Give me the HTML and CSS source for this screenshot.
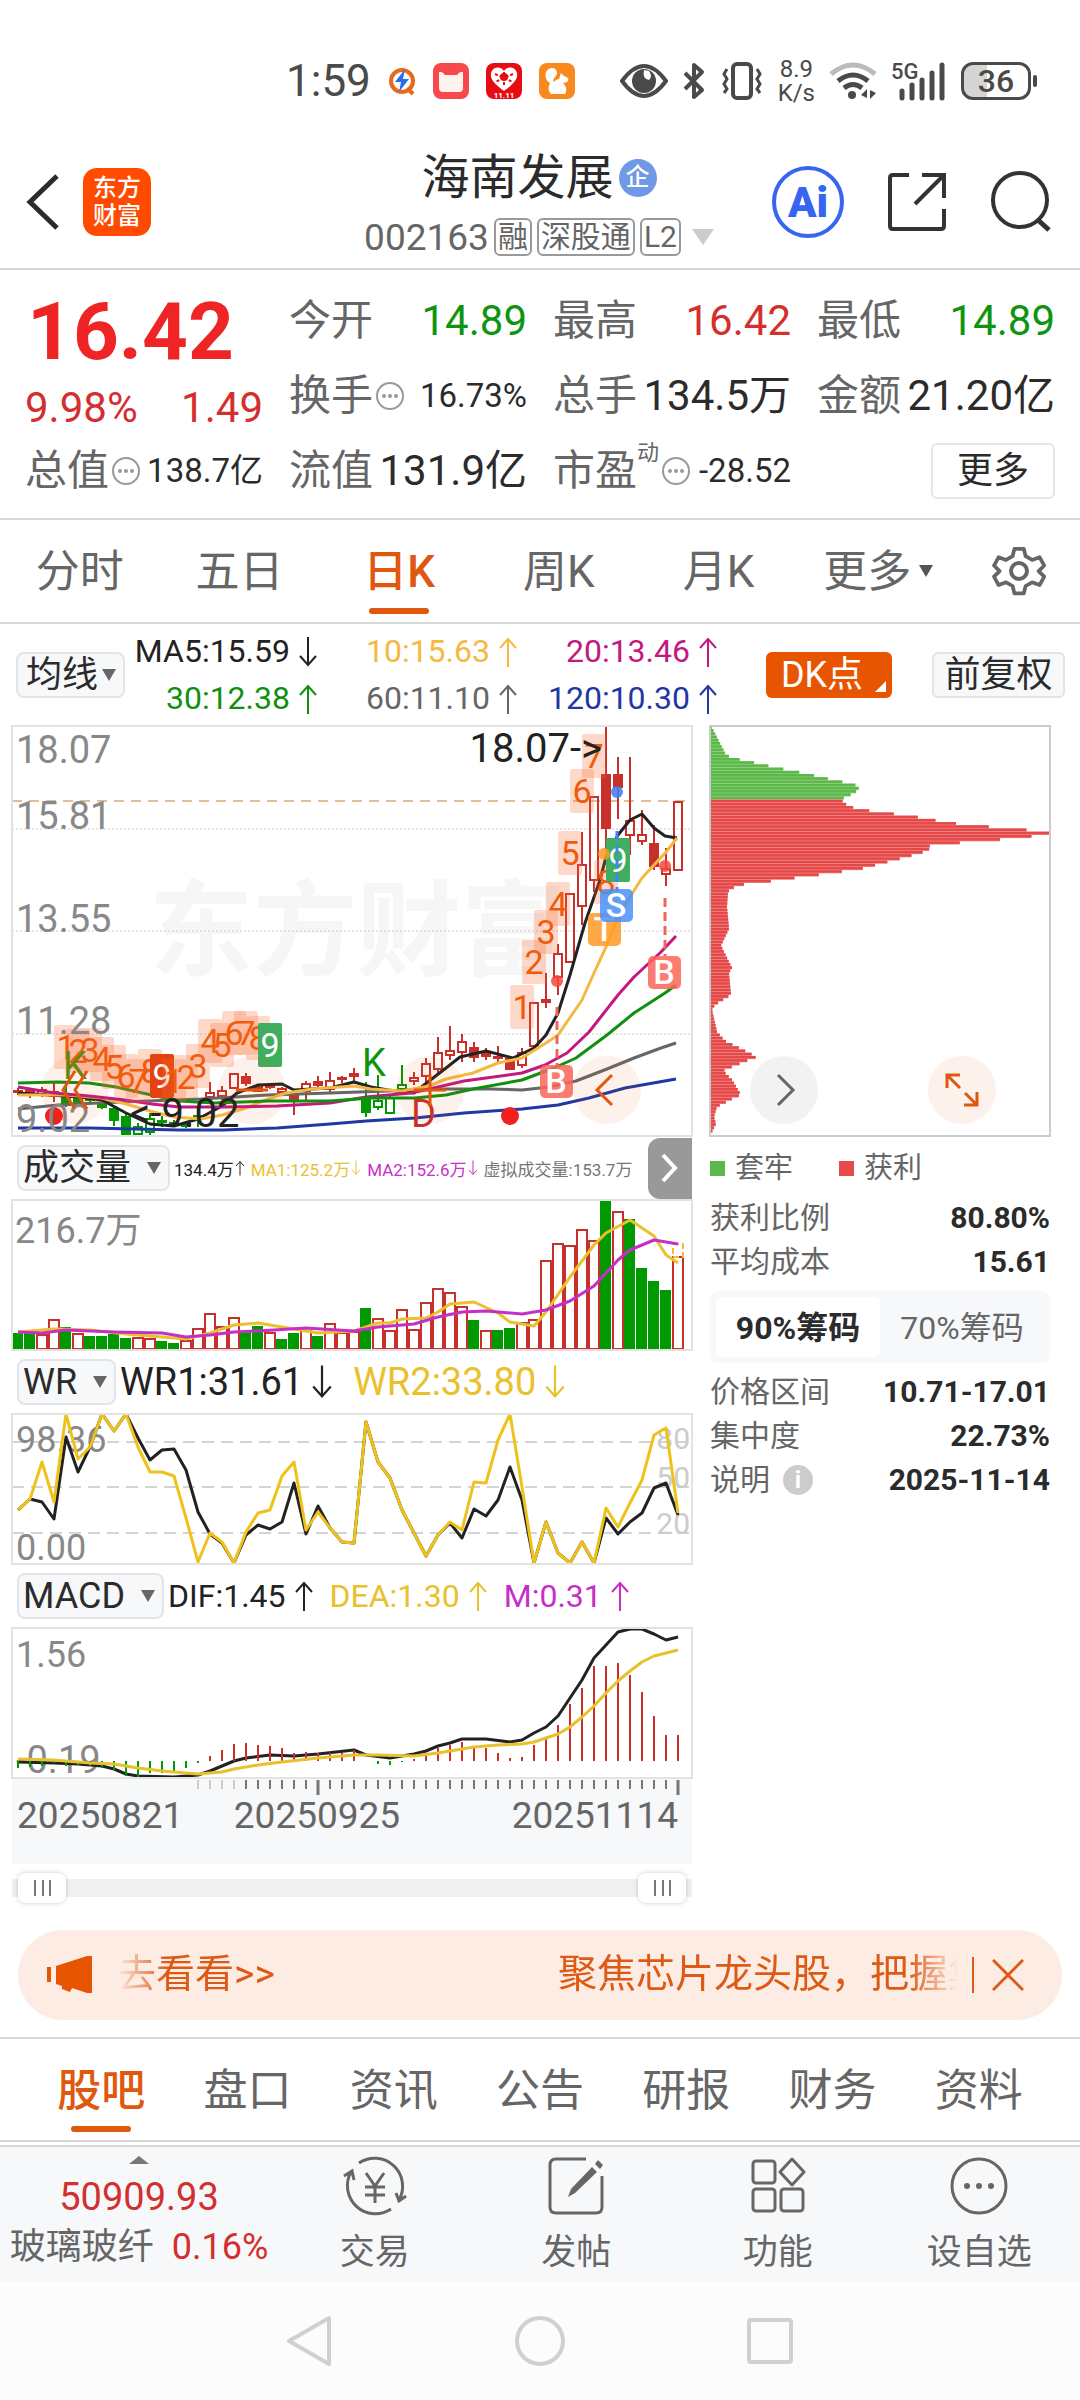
FILE: index.html
```html
<!DOCTYPE html>
<html lang="zh-CN">
<head>
    <meta charset="UTF-8">
    <meta name="viewport" content="width=device-width, initial-scale=1.0">
    <title>海南发展 002163</title>
    <link rel="stylesheet" href="styles.css">
</head>
<body>
    <svg class="defs" aria-hidden="true">
        <symbol id="up" viewBox="0 0 20 30"><path d="M10 30V2M2 11l8-9 8 9" fill="none" stroke="currentColor" stroke-width="2"/></symbol>
        <symbol id="down" viewBox="0 0 20 30"><path d="M10 0v28M2 19l8 9 8-9" fill="none" stroke="currentColor" stroke-width="2"/></symbol>
        <symbol id="dots" viewBox="0 0 30 30"><circle cx="15" cy="15" r="13" fill="none" stroke="#999" stroke-width="2"/><g fill="#999"><circle cx="9" cy="15" r="2"/><circle cx="15" cy="15" r="2"/><circle cx="21" cy="15" r="2"/></g></symbol>
    </svg>

    <div class="status-bar">
        <span class="clock">1:59</span>
        <svg width="28" height="30" viewBox="0 0 28 30"><circle cx="14" cy="15" r="11" fill="#fff" stroke="#e8691b" stroke-width="4"/><path d="M19 22l6 6" stroke="#e8691b" stroke-width="4"/><path d="M17 3L7 16h6l-2 10 10-13h-6z" fill="#2c6cf0"/></svg>
        <svg width="36" height="36" viewBox="0 0 36 36"><rect width="36" height="36" rx="8" fill="#f8484c"/><path d="M6 9q3-1 6 3h12q3-4 6-3v16q0 4-4 4H10q-4 0-4-4z" fill="#fff3ef"/></svg>
        <svg width="36" height="36" viewBox="0 0 36 36"><rect width="36" height="36" rx="8" fill="#e60c14"/><path d="M18 28C7 20 4 15 5 10c2-7 10-7 13-2 3-5 11-5 13 2 1 5-2 10-13 18z" fill="#fff"/><path d="M18 9v15M9 11l18 8M27 11L9 19" stroke="#e60c14" stroke-width="2" stroke-dasharray="3 2"/><circle cx="18" cy="14" r="4" fill="#e60c14"/><text x="18" y="35" text-anchor="middle" font-size="8" font-weight="700" fill="#fff">11.11</text></svg>
        <svg width="36" height="36" viewBox="0 0 36 36"><rect width="36" height="36" rx="8" fill="#f8891d"/><path d="M7 15C5 9 9 5 13 5c5 0 6 5 4 8-2 2-3 4-3 6 2-1 4-3 6-3l2-6 3 3c4 1 6 4 3 6l-4 1c4 4 4 8 2 11H12c-3-3-3-7-1-11-2-1-4-3-4-5z" fill="#fff"/></svg>
        <div class="status-right">
            <svg width="48" height="34" viewBox="0 0 48 34"><path d="M2 17Q24-13 46 17 24 47 2 17z" fill="none" stroke="#4a4a4a" stroke-width="4"/><circle cx="24" cy="17" r="12" fill="#4a4a4a"/><path d="M24 6q-2 9 5 10 4-4 0-9z" fill="#fff"/></svg>
            <svg width="24" height="38" viewBox="0 0 24 38"><path d="M3 11l17 17-8 7V3l8 7L3 27" fill="none" stroke="#4a4a4a" stroke-width="4" stroke-linejoin="round"/></svg>
            <svg width="44" height="38" viewBox="0 0 44 38"><rect x="13" y="2" width="18" height="34" rx="4" fill="none" stroke="#4a4a4a" stroke-width="4"/><path d="M7 7L4 12l3 5-3 5 3 5-3 4M37 7l3 5-3 5 3 5-3 5 3 4" fill="none" stroke="#4a4a4a" stroke-width="3"/></svg>
            <span class="speed">8.9<br>K/s</span>
            <svg width="48" height="38" viewBox="0 0 48 38"><g fill="none" stroke-width="5"><path d="M2 12Q24-6 46 12" stroke="#bbb"/><path d="M9 19q15-12 30 0M15 26q9-7 18 0" stroke="#4a4a4a"/></g><circle cx="23" cy="33" r="4" fill="#4a4a4a"/><path d="M32 33l6-6v9zM47 31l-6 6v-9z" fill="#4a4a4a"/></svg>
            <svg width="56" height="42" viewBox="0 0 56 42"><text x="0" y="19" font-size="22" font-weight="500" fill="#4a4a4a">5G</text><path d="M11 31v7M21 25v13M31 20v18M41 13v25M51 5v33" stroke="#4a4a4a" stroke-width="5" stroke-linecap="round"/></svg>
            <span class="battery">36</span>
        </div>
    </div>

    <header class="header">
        <div class="header-left">
            <button class="icon-btn" aria-label="返回"><svg width="34" height="58" viewBox="0 0 34 58"><path d="M31 3L4 29l27 26" fill="none" stroke="#2b2b2b" stroke-width="5"/></svg></button>
            <div class="logo">东方<br>财富</div>
        </div>
        <div class="title">
            <h1>海南发展<span class="ent">企</span></h1>
            <div class="code">002163<span class="tag">融</span><span class="tag">深股通</span><span class="tag">L2</span><svg width="22" height="16" viewBox="0 0 22 16"><path d="M0 0h22L11 16z" fill="#ccc"/></svg></div>
        </div>
        <div class="header-right">
            <button class="icon-btn ai" aria-label="AI 助手">Ai</button>
            <button class="icon-btn" aria-label="分享"><svg width="62" height="62" viewBox="0 0 62 62"><path d="M23 4H7q-3 0-3 3v48q0 3 3 3h48q3 0 3-3V38M36 4h22v23M57 5L29 33" fill="none" stroke="#333" stroke-width="4"/></svg></button>
            <button class="icon-btn" aria-label="搜索"><svg width="62" height="62" viewBox="0 0 62 62"><circle cx="30" cy="29" r="27" fill="none" stroke="#333" stroke-width="4"/><path d="M48 49l11 10" stroke="#333" stroke-width="5"/></svg></button>
        </div>
    </header>

    <section class="quote">
        <div class="price">
            <strong>16.42</strong>
            <div class="change"><span>9.98%</span><span>1.49</span></div>
        </div>
        <div class="stat"><span>今开</span><b class="green">14.89</b></div>
        <div class="stat"><span>最高</span><b class="red">16.42</b></div>
        <div class="stat"><span>最低</span><b class="green">14.89</b></div>
        <div class="stat"><span>换手<svg class="dots"><use href="#dots"/></svg></span><b class="small">16.73%</b></div>
        <div class="stat"><span>总手</span><b>134.5万</b></div>
        <div class="stat"><span>金额</span><b>21.20亿</b></div>
        <div class="stat"><span>总值<svg class="dots"><use href="#dots"/></svg></span><b class="small">138.7亿</b></div>
        <div class="stat"><span>流值</span><b>131.9亿</b></div>
        <div class="stat"><span>市盈<sup>动</sup><svg class="dots"><use href="#dots"/></svg></span><b class="small">-28.52</b></div>
        <div class="stat"><button class="more">更多</button></div>
    </section>

    <nav class="periods">
        <a href="#">分时</a>
        <a href="#">五日</a>
        <a href="#" class="active">日K</a>
        <a href="#">周K</a>
        <a href="#">月K</a>
        <a href="#">更多<i class="tri"></i></a>
        <button class="icon-btn gear" aria-label="设置"><svg width="54" height="54" viewBox="0 0 54 54"><path d="M22 3h10l2 8 7 4 8-3 5 9-6 6 6 6-5 9-8-3-7 4-2 8H22l-2-8-7-4-8 3-5-9 6-6-6-6 5-9 8 3 7-4z" transform="translate(2 2) scale(.93)" fill="none" stroke="#666" stroke-width="4" stroke-linejoin="round"/><circle cx="27" cy="27" r="8" fill="none" stroke="#666" stroke-width="4"/></svg></button>
    </nav>

    <div class="ma-row">
        <label class="picker tight"><select aria-label="主图指标"><option>均线</option></select></label>
        <div class="ma-values">
            <span class="c-ma5">MA5:15.59<svg class="arrow"><use href="#down"/></svg></span>
            <span class="c-ma10">10:15.63<svg class="arrow"><use href="#up"/></svg></span>
            <span class="c-ma20">20:13.46<svg class="arrow"><use href="#up"/></svg></span>
            <span class="c-ma30">30:12.38<svg class="arrow"><use href="#up"/></svg></span>
            <span class="c-ma60">60:11.10<svg class="arrow"><use href="#up"/></svg></span>
            <span class="c-ma120">120:10.30<svg class="arrow"><use href="#up"/></svg></span>
        </div>
        <button class="dk">DK点</button>
        <button class="adjust">前复权</button>
    </div>

    <main class="content">
        <div class="charts">
            <div class="chart-box">
                <svg id="kline" class="chart" viewBox="0 0 680 410"></svg>
                <div class="chart-tools">
                    <button aria-label="最左"><svg width="34" height="42" viewBox="0 0 34 42"><path d="M17 2L5 21l12 19M29 2L17 21l12 19"/></svg></button>
                    <button aria-label="缩小"><svg width="34" height="34" viewBox="0 0 34 34"><path d="M1 17h32"/></svg></button>
                    <button aria-label="放大"><svg width="34" height="34" viewBox="0 0 34 34"><path d="M1 17h32M17 1v32"/></svg></button>
                    <button aria-label="向左"><svg width="34" height="34" viewBox="0 0 34 34"><path d="M22 2L7 17l15 15"/></svg></button>
                </div>
            </div>

            <div class="indicator">
                <label class="picker"><select aria-label="副图一"><option>成交量</option></select></label>
                <div class="legend tiny">
                    <span class="c-ma5">134.4万<svg class="arrow"><use href="#up"/></svg></span>
                    <span class="c-gold">MA1:125.2万<svg class="arrow"><use href="#down"/></svg></span>
                    <span class="c-purple">MA2:152.6万<svg class="arrow"><use href="#down"/></svg></span>
                    <span class="c-grey">虚拟成交量:153.7万</span>
                </div>
                <button class="expand" aria-label="展开"><svg width="20" height="32" viewBox="0 0 20 32"><path d="M3 3l12 13L3 29" fill="none" stroke="#fff" stroke-width="4"/></svg></button>
            </div>
            <svg id="volume" class="chart" viewBox="0 0 680 150"></svg>

            <div class="indicator">
                <label class="picker"><select aria-label="副图二"><option>WR</option></select></label>
                <div class="legend big">
                    <span class="c-ma5">WR1:31.61<svg class="arrow"><use href="#down"/></svg></span>
                    <span class="c-gold">WR2:33.80<svg class="arrow"><use href="#down"/></svg></span>
                </div>
            </div>
            <svg id="wr" class="chart" viewBox="0 0 680 150"></svg>

            <div class="indicator">
                <label class="picker"><select aria-label="副图三"><option>MACD</option></select></label>
                <div class="legend">
                    <span class="c-ma5">DIF:1.45<svg class="arrow"><use href="#up"/></svg></span>
                    <span class="c-gold">DEA:1.30<svg class="arrow"><use href="#up"/></svg></span>
                    <span class="c-purple">M:0.31<svg class="arrow"><use href="#up"/></svg></span>
                </div>
            </div>
            <svg id="macd" class="chart" viewBox="0 0 680 150"></svg>
            <svg id="axis" class="chart axis" viewBox="0 0 680 86"></svg>

            <div class="range">
                <input type="range" min="0" max="100" value="0" aria-label="起始日期">
                <input type="range" min="0" max="100" value="100" aria-label="结束日期">
            </div>
        </div>

        <aside class="chips">
            <div class="chart-box">
                <svg id="chipChart" class="chart" viewBox="0 0 340 410"></svg>
                <div class="chip-tools">
                    <button class="grey" aria-label="收起"><svg width="34" height="34" viewBox="0 0 34 34"><path d="M11 2l15 15-15 15"/></svg></button>
                    <button aria-label="全屏"><svg width="34" height="34" viewBox="0 0 34 34"><path d="M15 2H2v13M2 2l13 13M32 19v13H19M32 32L20 20" stroke-width="4"/></svg></button>
                </div>
            </div>
            <div class="chip-legend"><span><i class="sq g"></i>套牢</span><span><i class="sq r"></i>获利</span></div>
            <dl>
                <div><dt>获利比例</dt><dd>80.80%</dd></div>
                <div><dt>平均成本</dt><dd>15.61</dd></div>
            </dl>
            <div class="segment">
                <button class="on">90%筹码</button>
                <button>70%筹码</button>
            </div>
            <dl>
                <div><dt>价格区间</dt><dd>10.71-17.01</dd></div>
                <div><dt>集中度</dt><dd>22.73%</dd></div>
                <div><dt>说明<span class="info">i</span></dt><dd>2025-11-14</dd></div>
            </dl>
        </aside>
    </main>

    <div class="banner">
        <svg width="46" height="42" viewBox="0 0 46 42"><path d="M2 13v15" stroke="#e85500" stroke-width="4"/><path d="M9 12L40 2h5v37h-5l-15-5-2 4-8-3v-3l-6-2z" fill="#e85500"/></svg>
        <a href="#" class="marquee"><span>去看看&gt;&gt;</span><span class="next">聚焦芯片龙头股，把握集</span></a>
        <button class="icon-btn close" aria-label="关闭"><svg width="32" height="34" viewBox="0 0 32 34"><path d="M1 2l30 30M31 2L1 32" stroke="#dd5a14" stroke-width="3"/></svg></button>
    </div>

    <nav class="sections">
        <a href="#" class="active">股吧</a>
        <a href="#">盘口</a>
        <a href="#">资讯</a>
        <a href="#">公告</a>
        <a href="#">研报</a>
        <a href="#">财务</a>
        <a href="#">资料</a>
    </nav>

    <footer class="toolbar">
        <a href="#" class="index">
            <svg width="20" height="8" viewBox="0 0 20 8"><path d="M0 8L10 0l10 8z" fill="#777"/></svg>
            <b>50909.93</b>
            <span>玻璃玻纤<em>0.16%</em></span>
        </a>
        <a href="#"><svg width="66" height="60" viewBox="0 0 66 60"><path d="M17 7A28 28 0 0 1 57 44M49 53A28 28 0 0 1 9 16M2 20l8-5 2 9M64 40l-7 5-3-8M24 17l9 13 9-13M33 30v17M23 31h20M23 39h20"/></svg>交易</a>
        <a href="#"><svg width="58" height="60" viewBox="0 0 58 60"><path d="M39 3H9Q3 3 3 9v42q0 6 6 6h40q6 0 6-6V20"/><path d="M45 11L24 33l-3 8 7-4 22-21zM48 8l3-4 5 5-3 4z" fill="#666" stroke="none"/></svg>发帖</a>
        <a href="#"><svg width="56" height="60" viewBox="0 0 56 60"><rect x="3" y="5" width="22" height="22" rx="3"/><rect x="3" y="33" width="22" height="22" rx="3"/><rect x="31" y="33" width="22" height="22" rx="3"/><path d="M42 3l12 13-12 13-12-13z" stroke-linejoin="round"/></svg>功能</a>
        <a href="#"><svg width="58" height="60" viewBox="0 0 58 60"><circle cx="29" cy="30" r="27"/><g fill="#666" stroke="none"><circle cx="17" cy="30" r="3"/><circle cx="29" cy="30" r="3"/><circle cx="41" cy="30" r="3"/></g></svg>设自选</a>
    </footer>

    <div class="system-nav">
        <button class="icon-btn" aria-label="后退"><svg width="52" height="52" viewBox="0 0 52 52"><path d="M45 3v46L5 26z"/></svg></button>
        <button class="icon-btn" aria-label="主页"><svg width="52" height="52" viewBox="0 0 52 52"><circle cx="26" cy="26" r="23"/></svg></button>
        <button class="icon-btn" aria-label="最近任务"><svg width="52" height="52" viewBox="0 0 52 52"><rect x="5" y="5" width="42" height="42" rx="2"/></svg></button>
    </div>

    <script src="script.js"></script>
</body>
</html>
```

FILE: styles.css
```css
* {
    margin: 0;
    padding: 0;
    box-sizing: border-box;
}

body {
    display: flex;
    flex-direction: column;
    min-height: 100vh;
    background-color: #fff;
    color: #2b2b2b;
    font-family: Roboto, "Noto Sans CJK SC", sans-serif;
}

button,
select {
    font-family: inherit;
    color: inherit;
    border: none;
    background: none;
    cursor: pointer;
}

a {
    color: inherit;
    text-decoration: none;
}

svg {
    display: block;
    flex: none;
}

.defs {
    position: absolute;
    width: 0;
    height: 0;
}

.icon-btn {
    display: flex;
    align-items: center;
    justify-content: center;
}

.c-ma5 { color: #222; }
.c-ma10 { color: #f5b942; }
.c-ma20 { color: #c2187f; }
.c-ma30 { color: #0f900f; }
.c-ma60 { color: #666; }
.c-ma120 { color: #1f38a4; }
.c-gold { color: #e9c12c; }
.c-purple { color: #c62fc6; }
.c-grey { color: #777; }

/* Status bar */
.status-bar {
    display: flex;
    align-items: center;
    gap: 17px;
    height: 120px;
    padding: 42px 49px 0 286px;
    color: #4a4a4a;
}

.clock {
    font-size: 44px;
}

.status-right {
    display: flex;
    align-items: center;
    gap: 14px;
    margin-left: auto;
}

.speed {
    font-size: 24px;
    line-height: 24px;
    text-align: center;
}

.battery {
    position: relative;
    width: 70px;
    height: 38px;
    border: 3px solid #4a4a4a;
    border-radius: 12px;
    background: linear-gradient(90deg, #d5d5d5 36%, #fff 36%);
    font-size: 32px;
    font-weight: 500;
    line-height: 32px;
    text-align: center;
}

.battery::after {
    content: "";
    position: absolute;
    right: -9px;
    top: 10px;
    width: 4px;
    height: 12px;
    border-radius: 2px;
    background-color: #4a4a4a;
}

/* Header */
.header {
    display: grid;
    grid-template-columns: 1fr auto 1fr;
    align-items: center;
    height: 150px;
    padding: 16px 28px 0 26px;
    border-bottom: 2px solid #d8d8d8;
}

.header-left,
.header-right {
    display: flex;
    align-items: center;
}

.header-left {
    gap: 23px;
}

.header-right {
    justify-content: flex-end;
    gap: 42px;
}

.logo {
    width: 68px;
    height: 68px;
    padding-top: 6px;
    border-radius: 14px;
    background-color: #ff4a00;
    color: #fff;
    font-size: 24px;
    font-weight: 500;
    line-height: 28px;
    text-align: center;
}

.title {
    padding-top: 10px;
    text-align: center;
}

.title h1 {
    display: flex;
    align-items: center;
    justify-content: center;
    gap: 5px;
    font-size: 48px;
    font-weight: 400;
    line-height: 60px;
}

.ent {
    width: 38px;
    height: 38px;
    border-radius: 50%;
    background-color: #6f98e6;
    color: #fff;
    font-size: 24px;
    font-weight: 500;
    line-height: 36px;
}

.code {
    display: flex;
    align-items: center;
    gap: 5px;
    height: 58px;
    color: #666;
    font-size: 37px;
}

.code svg {
    margin-left: 6px;
}

.tag {
    padding: 0 2px;
    border: 2px solid #999;
    border-radius: 6px;
    font-size: 30px;
    line-height: 34px;
}

.ai {
    width: 72px;
    height: 72px;
    border: 4px solid #3666f0;
    border-radius: 50%;
    color: #3666f0;
    font-size: 42px;
    font-weight: 900;
}

/* Quote */
.quote {
    display: grid;
    grid-template-columns: repeat(4, 1fr);
    grid-auto-rows: 75px;
    column-gap: 26px;
    padding: 13px 25px 10px;
    border-bottom: 2px solid #d8d8d8;
}

.price {
    grid-row: span 2;
    color: #d32f2f;
}

.price strong {
    display: block;
    padding-left: 2px;
    color: #ef2525;
    font-size: 80px;
    line-height: 98px;
}

.change {
    display: flex;
    justify-content: space-between;
    font-size: 42px;
    line-height: 54px;
}

.stat {
    display: flex;
    align-items: center;
    justify-content: space-between;
    color: #666;
    font-size: 42px;
    line-height: 60px;
    white-space: nowrap;
}

.stat > span {
    display: flex;
    align-items: center;
}

.stat b {
    color: #2b2b2b;
    font-size: 42px;
    font-weight: 400;
}

.stat b.small {
    font-size: 33px;
}

.stat b.red { color: #d32f2f; }
.stat b.green { color: #0f940f; }

.stat sup {
    align-self: flex-start;
    font-size: 22px;
    line-height: 24px;
}

.dots {
    width: 30px;
    height: 30px;
    margin-left: 2px;
}

.more {
    width: 124px;
    height: 56px;
    margin-left: auto;
    border: 2px solid #e6e6e6;
    border-radius: 6px;
    color: #2b2b2b;
    font-size: 36px;
    line-height: 48px;
}

/* Period tabs */
.periods {
    display: flex;
    height: 104px;
    border-bottom: 2px solid #d8d8d8;
    color: #666;
    font-size: 44px;
}

.periods a,
.sections a {
    position: relative;
    flex: 1;
    line-height: 104px;
    text-align: center;
}

.sections a {
    height: 101px;
}

.periods .active,
.sections .active {
    color: #e0580f;
    font-weight: 500;
}

.periods .active::after,
.sections .active::after {
    content: "";
    position: absolute;
    left: 50%;
    bottom: 8px;
    width: 60px;
    height: 6px;
    margin-left: -30px;
    border-radius: 3px;
    background-color: #e0580f;
}

.tri {
    display: inline-block;
    margin-left: 8px;
    border: 7px solid transparent;
    border-top: 12px solid #555;
    border-bottom: 0;
    vertical-align: 10px;
}

.gear {
    width: 122px;
}

/* Moving averages */
.ma-row {
    display: flex;
    align-items: center;
    height: 102px;
    padding: 0 15px 0 16px;
}

.picker {
    position: relative;
    flex: none;
}

.picker::after {
    content: "";
    position: absolute;
    right: 9px;
    top: 17px;
    border: 7px solid transparent;
    border-top: 12px solid #666;
    border-bottom: 0;
    pointer-events: none;
}

.picker select {
    height: 46px;
    padding: 0 36px 0 4px;
    border: 2px solid #e3e4e8;
    border-radius: 8px;
    background-color: #f7f8fa;
    font-size: 36px;
    line-height: 40px;
    appearance: none;
}

.picker.tight select {
    padding: 0 24px 0 8px;
}

.ma-values {
    display: grid;
    grid-template-columns: 178px 200px 200px;
    margin: 0 auto 0 15px;
    font-size: 32px;
    line-height: 47px;
}

.ma-values span {
    display: flex;
    align-items: center;
    justify-content: flex-end;
    gap: 8px;
}

.arrow {
    width: 20px;
    height: 30px;
}

.dk,
.adjust {
    height: 46px;
    border-radius: 6px;
    font-size: 36px;
    line-height: 40px;
}

.dk {
    position: relative;
    width: 126px;
    margin-right: 40px;
    padding-right: 14px;
    background-color: #e85500;
    color: #fff;
}

.dk::after {
    content: "";
    position: absolute;
    right: 6px;
    bottom: 6px;
    border-left: 11px solid transparent;
    border-bottom: 11px solid #fff;
}

.adjust {
    width: 133px;
    border: 2px solid #e3e4e8;
    background-color: #f7f8fa;
}

/* Charts */
.content {
    display: grid;
    grid-template-columns: 2fr 1fr;
    column-gap: 18px;
    padding: 0 30px 0 12px;
}

.chart-box {
    position: relative;
}

.chart {
    width: 100%;
    height: auto;
    outline: 2px solid #e2e2e2;
    outline-offset: -1px;
}

.chips .chart {
    outline-color: #ccc;
}

.chart.axis {
    outline: none;
    background-color: #f7f8fa;
}

.chart-tools,
.chip-tools {
    position: absolute;
    left: 0;
    right: 0;
    bottom: 12px;
    display: flex;
    justify-content: space-between;
    padding: 0 51px 0 29px;
}

.chip-tools {
    padding: 0 54px 0 40px;
}

.chart-tools button,
.chip-tools button {
    display: flex;
    align-items: center;
    justify-content: center;
    width: 68px;
    height: 68px;
    border-radius: 50%;
    background-color: rgba(232, 85, 0, 0.08);
}

.chip-tools .grey {
    background-color: #f2f2f2;
}

.chart-tools path,
.chip-tools path {
    fill: none;
    stroke: #e0580f;
    stroke-width: 3;
}

.chip-tools .grey path {
    stroke: #666;
}

.indicator {
    display: flex;
    align-items: center;
    height: 64px;
    padding-left: 5px;
}

.legend {
    display: flex;
    gap: 16px;
    padding-left: 4px;
    font-size: 32px;
    white-space: nowrap;
}

.legend span {
    display: flex;
    align-items: center;
    gap: 8px;
}

.legend.big {
    gap: 20px;
    font-size: 38px;
}

.legend.big .arrow {
    width: 22px;
    height: 34px;
}

.legend.tiny {
    gap: 6px;
    font-size: 17px;
}

.legend.tiny span {
    gap: 1px;
}

.legend.tiny .arrow {
    width: 10px;
    height: 20px;
}

.expand {
    display: flex;
    flex: none;
    align-items: center;
    justify-content: center;
    width: 44px;
    height: 61px;
    margin-left: auto;
    border-radius: 12px 0 0 12px;
    background-color: #999;
}

.range {
    display: grid;
    align-items: center;
    height: 48px;
    padding: 0 6px;
    background: linear-gradient(#f0f0f3, #f0f0f3) center / 100% 18px no-repeat;
}

.range input {
    grid-area: 1 / 1;
    width: 100%;
    height: 30px;
    background: none;
    appearance: none;
    pointer-events: none;
}

.range input::-webkit-slider-thumb {
    width: 48px;
    height: 30px;
    border-radius: 8px;
    background: linear-gradient(90deg, #777 2px, transparent 2px, transparent 8px, #777 8px, #777 10px, transparent 10px, transparent 15px, #777 15px) center / 17px 16px no-repeat #fff;
    box-shadow: 0 0 5px rgba(0, 0, 0, 0.2);
    appearance: none;
    pointer-events: auto;
}

/* Chip distribution */
.chip-legend {
    display: flex;
    gap: 46px;
    padding-top: 4px;
    color: #666;
    font-size: 29px;
    line-height: 56px;
}

.chip-legend span {
    display: flex;
    align-items: center;
    gap: 10px;
}

.sq {
    width: 15px;
    height: 15px;
}

.sq.g { background-color: #5cb848; }
.sq.r { background-color: #e84a4a; }

.chips dl div {
    display: flex;
    align-items: center;
    justify-content: space-between;
    height: 44px;
    font-size: 30px;
    line-height: 44px;
}

.chips dt {
    display: flex;
    align-items: center;
    color: #666;
}

.chips dd {
    font-weight: 700;
}

.info {
    width: 30px;
    height: 30px;
    margin-left: 13px;
    border-radius: 50%;
    background-color: #ccc;
    color: #fff;
    font-size: 24px;
    font-weight: 700;
    line-height: 30px;
    text-align: center;
}

.segment {
    display: flex;
    height: 72px;
    margin: 7px 0;
    padding: 6px;
    border-radius: 8px;
    background-color: #f7f8fa;
}

.segment button {
    flex: 1;
    padding-bottom: 4px;
    border-radius: 6px;
    color: #666;
    font-size: 32px;
}

.segment .on {
    background-color: #fff;
    color: #2b2b2b;
    font-weight: 700;
}

/* Banner */
.banner {
    display: flex;
    align-items: center;
    height: 90px;
    margin: 18px 18px 17px;
    padding: 0 38px 0 29px;
    border-radius: 45px;
    background-color: #fcece3;
    color: #dd5a14;
    font-size: 39px;
}

.marquee {
    display: flex;
    flex: 1;
    justify-content: space-between;
    height: 60px;
    margin: 0 14px 0 24px;
    overflow: hidden;
    line-height: 58px;
    white-space: nowrap;
    mask-image: linear-gradient(90deg, transparent, #000 50px, #000 calc(100% - 50px), transparent);
}

.marquee .next {
    width: 400px;
    overflow: hidden;
}

.close {
    height: 36px;
    padding-left: 18px;
    border-left: 2px solid #dd5a14;
}

/* Section tabs */
.sections {
    display: flex;
    padding: 0 28px;
    border-top: 2px solid #d8d8d8;
    border-bottom: 2px solid #d8d8d8;
    color: #666;
    font-size: 44px;
}

/* Bottom toolbar */
.toolbar {
    display: grid;
    grid-template-columns: 274px repeat(4, 1fr);
    height: 137px;
    margin-top: 3px;
    border-top: 2px solid #d8d8d8;
    background-color: #f7f8fa;
    color: #666;
    font-size: 35px;
}

.toolbar a {
    display: flex;
    flex-direction: column;
    align-items: center;
    padding-top: 9px;
    line-height: 74px;
}

.toolbar a:not(.index) svg {
    fill: none;
    stroke: #666;
    stroke-width: 3;
}

.toolbar .index {
    padding-left: 4px;
    line-height: 50px;
}

.index b {
    padding-top: 8px;
    color: #d32f2f;
    font-size: 38px;
    font-weight: 400;
}

.index span {
    display: flex;
    gap: 18px;
    font-size: 36px;
}

.index em {
    color: #d32f2f;
    font-style: normal;
}

/* System navigation */
.system-nav {
    display: flex;
    flex: 1;
    align-items: center;
    justify-content: center;
    gap: 178px;
    min-height: 110px;
    background-color: #fcfcfc;
}

.system-nav svg {
    fill: none;
    stroke: #d0d0d0;
    stroke-width: 4;
    stroke-linejoin: round;
}
```

FILE: script.js
```js
const RED = '#c9302c';
const GREEN = '#009a00';
const x = i => 6 + i * 12;

function rect(x, y, w, h, attrs) {
    return `<rect x="${x}" y="${y}" width="${w}" height="${h}" ${attrs}/>`;
}

function line(x1, y1, x2, y2, attrs) {
    return `<path d="M${x1} ${y1}L${x2} ${y2}" ${attrs}/>`;
}

function text(x, y, size, color, value, attrs = '') {
    return `<text x="${x}" y="${y}" font-size="${size}" fill="${color}" ${attrs}>${value}</text>`;
}

function poly(points, color) {
    return `<polyline points="${points}" fill="none" stroke="${color}" stroke-width="3" stroke-linejoin="round"/>`;
}

// [index, y] pairs -> polyline
function series(points, color) {
    return poly(points.map(p => x(p[0]) + ',' + p[1]).join(' '), color);
}

// type, high, body top, body bottom, low. Upper case is a filled body.
const candles = `R362,364,367,369 R362,364,370,372 r361,363,369,371 R357,365,371,376 G357,371,379,381 G371,372,378,379
G370,371,375,377 G374,377,382,383 G381,382,395,400 G388,390,410,410 g397,400,409,409 g387,392,407,409 g390,394,397,401
G394,396,399,400 g395,397,401,402 g382,389,394,401 r356,366,372,377 r360,364,371,374 r347,347,363,363 R347,350,358,360
R358,359,366,366 R357,358,362,363 r361,362,367,368 R364,367,374,389 r355,357,366,374 R350,355,360,364 r346,354,364,367
R350,351,353,357 R342,347,351,356 G356,371,387,391 g349,374,382,384 g370,371,388,388 g339,358,364,367 r346,351,356,359
r332,337,351,357 r311,326,344,347 r300,324,330,334 r308,315,327,336 R316,321,332,336 R322,327,331,334 R320,330,332,336
R332,332,344,344 r322,326,340,342 r276,276,321,321 R247,273,277,282 r218,227,252,269 r167,167,237,237 r106,138,181,199
r70,70,155,166 R0,48,103,124 R31,48,62,93 r31,94,110,129 r84,108,116,119 R99,117,141,144 r122,142,149,160 r75,75,145,145`.split(/\s+/);

const averages = [
    ['#1f38a4', '6,402 77,402 167,404 211,404 265,402 318,398 354,395 403,392 452,387 510,383 546,379 577,372 613,362 664,353'],
    ['#666', '6,383 46,379 86,377 135,375 189,373 256,369 318,367 376,365 434,363 479,363 510,364 537,361 564,355 595,343 622,332 649,322 664,317'],
    ['#222', '6,367 68,371 90,374 114,387 138,398 162,400 186,393 210,380 225,367 246,359 270,358 282,364 318,362 342,356 359,361 376,364 402,367 412,359 434,342 448,331 474,325 501,332 522,322 534,309 546,287 558,249 573,197 588,154 594,131 606,109 618,94 630,88 642,102 653,110 665,112'],
    ['#f5b942', '6,369 55,369 90,372 114,378 138,385 162,391 189,393 210,389 234,382 251,375 274,367 300,363 342,360 359,363 390,365 417,360 434,353 461,347 486,337 510,332 534,317 546,309 570,274 582,247 594,221 606,192 618,171 630,152 642,139 654,126 665,112'],
    ['#c2187f', '6,361 42,367 77,370 113,374 140,378 167,381 211,381 265,380 318,377 354,371 399,367 426,361 452,355 510,347 533,339 555,327 577,306 606,269 622,251 649,226 664,210'],
    ['#0f900f', '6,357 46,356 77,357 104,361 135,368 167,375 202,377 256,375 318,375 359,372 403,372 434,369 461,363 510,354 542,342 564,332 595,309 622,287 653,267 664,259']
];

// nine-turn counts: index, centre y, digit
const turns = [
    [4, 321, 1], [5, 325, 2], [6, 324, 3], [7, 333, 4], [8, 341, 5], [9, 350, 6], [10, 355, 7], [11, 345, 8], [12, 350, 9, '#e2430f'],
    [13, 355, 1], [14, 351, 2], [15, 340, 3], [16, 315, 4], [17, 319, 5], [18, 307, 6], [19, 307, 7], [20, 312, 8], [21, 319, 9, '#3fae60'],
    [42, 281, 1], [43, 236, 2], [44, 206, 3], [45, 178, 4], [46, 127, 5], [47, 65, 6], [48, 30, 7], [49, 156, 8], [50, 134, 9, '#3fae60']
];

function badge(bx, by, letter, color) {
    return rect(bx, by, 33, 33, `rx="5" fill="${color}" fill-opacity=".85"`) +
        text(bx + 16, by + 28, 34, '#fff', letter, 'text-anchor="middle" font-weight="500"');
}

function drawKline() {
    let s = text(137, 242, 104, '#f6f6f6', '东方财富', 'font-weight="700"');
    [103, 205, 308].forEach(y => s += line(0, y, 680, y, 'stroke="#ccc" stroke-dasharray="2 2"'));
    s += line(0, 75, 680, 75, 'stroke="#e0bf96" stroke-width="2" stroke-dasharray="10 7"');

    candles.forEach((c, i) => {
        const [high, top, bottom, low] = c.slice(1).split(',').map(Number);
        const color = /r/i.test(c[0]) ? RED : GREEN;
        const solid = c[0] === c[0].toUpperCase();
        s += line(x(i), high, x(i), top, `stroke="${color}" stroke-width="2"`);
        s += line(x(i), bottom, x(i), low, `stroke="${color}" stroke-width="2"`);
        s += rect(x(i) - 4, top + 1, 8, Math.max(bottom - top - 2, 1), `fill="${solid ? color : 'none'}" stroke="${color}" stroke-width="2"`);
    });

    averages.forEach(a => s += poly(a[1], a[0]));

    turns.forEach(([i, y, n, fill]) => {
        s += rect(x(i) - 12, y - 22, 24, 44, `rx="2" fill="${fill || '#fa6e32'}" fill-opacity="${fill ? 1 : 0.26}"`);
        s += text(x(i), y + 12, 34, fill ? '#fff' : '#f05a0a', n, 'text-anchor="middle"');
    });

    s += line(605, 105, 605, 165, 'stroke="#3d86f5" stroke-width="3" stroke-dasharray="9 5"');
    s += line(545, 281, 545, 339, 'stroke="#f0645a" stroke-width="3" stroke-dasharray="9 5"');
    s += line(653, 172, 653, 230, 'stroke="#f0645a" stroke-width="3" stroke-dasharray="9 5"');
    [[605, 66, '#3d7df0'], [592, 128, '#fa9a1e'], [545, 255, '#f5483c'], [653, 140, '#f5483c']]
        .forEach(d => s += `<circle cx="${d[0]}" cy="${d[1]}" r="6" fill="${d[2]}" fill-opacity=".85"/>`);
    s += badge(576, 187, 'T', '#ff9a26') + badge(588, 163, 'S', '#4a90f8');
    s += badge(636, 230, 'B', '#fa6659') + badge(528, 339, 'B', '#fa6659');
    s += '<circle cx="42" cy="390" r="9" fill="#f02020"/><circle cx="498" cy="390" r="9" fill="#f02020"/>';

    s += text(51, 353, 38, '#5c8a12', 'K') + text(350, 350, 38, '#0f940f', 'K') + text(399, 401, 38, '#c9302c', 'D');
    s += text(118, 401, 40, '#222', '&lt;-9.02') + text(590, 36, 40, '#222', '18.07-&gt;', 'text-anchor="end"');
    [['18.07', 37], ['15.81', 103], ['13.55', 206], ['11.28', 308], ['9.02', 406]]
        .forEach(l => s += text(4, l[1], 38, '#888', l[0]));
    document.getElementById('kline').innerHTML = s;
}

function drawVolume() {
    const h = [17, 17, 16, 31, 23, 17, 14, 14, 16, 12, 13, 12, 9, 7, 10, 22, 37, 24, 33, 18, 24, 18, 11, 17, 20, 14, 27, 18, 19, 42, 32, 20, 41, 21, 48, 62, 58, 44, 30, 20, 20, 22, 28, 31, 90, 107, 105, 121, 110, 150, 139, 131, 82, 69, 60, 94];
    const green = [0, 1, 4, 6, 7, 8, 9, 12, 13, 19, 20, 22, 23, 25, 29, 38, 40, 41, 49, 51, 52, 53, 54];
    let s = text(3, 43, 36, '#888', '216.7万');
    h.forEach((v, i) => {
        s += green.includes(i)
            ? rect(x(i) - 6, 150 - v, 11, v, `fill="${GREEN}"`)
            : rect(x(i) - 5, 151 - v, 10, v - 2, `fill="#fff" stroke="${RED}" stroke-width="2"`);
    });
    s += rect(661, 44, 10, 13, 'fill="none" stroke="#f5b942" stroke-width="2" stroke-dasharray="6 3"');
    s += series([[0, 132], [3, 129], [6, 130], [9, 134], [14, 139], [16, 133], [18, 125], [20, 123], [22, 127], [25, 133], [28, 131], [30, 123], [31, 123], [32, 119], [34, 118], [35, 112], [36, 104], [38, 102], [40, 113], [41, 122], [43, 126], [44, 112], [46, 77], [48, 45], [49, 33], [51, 20], [53, 36], [54, 55], [55, 63]], '#e9c12c');
    s += series([[0, 132], [2, 133], [4, 130], [8, 132], [12, 133], [14, 137], [16, 135], [18, 132], [20, 131], [24, 128], [28, 131], [30, 127], [33, 124], [35, 117], [37, 112], [39, 111], [42, 114], [44, 110], [46, 101], [48, 86], [50, 60], [51, 50], [53, 40], [55, 44]], '#c62fc6');
    document.getElementById('volume').innerHTML = s;
}

function drawWr() {
    const wr1 = [96, 85, 88, 105, 23, 58, 33, 0, 17, 0, 24, 46, 36, 35, 56, 98, 120, 129, 149, 121, 111, 115, 108, 69, 120, 92, 114, 128, 129, 8, 48, 64, 96, 119, 142, 121, 109, 124, 95, 102, 86, 53, 86, 149, 108, 139, 149, 128, 149, 104, 120, 108, 99, 74, 69, 101];
    const wr2 = [96, 85, 48, 88, 0, 45, 33, 0, 17, 0, 33, 58, 58, 62, 104, 148, 119, 128, 149, 118, 99, 96, 62, 48, 116, 98, 114, 128, 129, 8, 48, 64, 96, 119, 142, 121, 108, 116, 68, 69, 26, 0, 73, 149, 108, 139, 149, 128, 149, 94, 113, 89, 66, 21, 14, 99];
    let s = '';
    [28, 73, 119].forEach(y => s += line(0, y, 680, y, 'stroke="#d4d4d4" stroke-width="2" stroke-dasharray="12 7"'));
    [['80', 35], ['50', 74], ['20', 120]].forEach(l => s += text(678, l[1], 30, '#ccc', l[0], 'text-anchor="end"'));
    s += text(4, 38, 36, '#888', '98.36') + text(4, 146, 36, '#888', '0.00');
    s += series(wr1.map((v, i) => [i, v]), '#222') + series(wr2.map((v, i) => [i, v]), '#efc21b');
    document.getElementById('wr').innerHTML = s;
}

function drawMacd() {
    const bars = [-7, -6, -5, -2, -5, -4, -5, -7, -9, -15, -16, -12, -12, -10, -7, -2, 5, 11, 17, 18, 16, 15, 13, 8, 9, 8, 8, 8, 11, 0, -3, -4, -1, 2, 8, 13, 16, 19, 14, 13, 8, 3, 4, 16, 22, 36, 57, 73, 95, 95, 98, 86, 69, 45, 26, 26];
    let s = text(4, 39, 36, '#888', '1.56') + text(4, 145, 38, '#888', '-0.19');
    s += series([[0, 134], [3, 135], [5, 136], [7, 138], [8, 141], [9, 146], [10, 148], [13, 149], [15, 147], [16, 143], [18, 133], [19, 130], [21, 127], [23, 128], [25, 126], [28, 122], [29, 127], [31, 130], [33, 126], [34, 123], [35, 118], [36, 115], [37, 111], [39, 111], [41, 114], [42, 112], [43, 105], [44, 99], [45, 88], [46, 70], [47, 52], [48, 30], [49, 17], [50, 4], [51, 1], [52, 1], [53, 6], [54, 12], [55, 9]], '#222');
    bars.forEach((v, i) => s += line(x(i), 133, x(i), 133 - v, `stroke="${v > 0 ? RED : GREEN}" stroke-width="2"`));
    s += series([[0, 131], [3, 132], [6, 135], [8, 136], [10, 140], [12, 143], [15, 146], [17, 144], [18, 141], [20, 137], [22, 134], [25, 130], [28, 127], [30, 127], [33, 128], [35, 125], [38, 119], [40, 117], [42, 116], [43, 114], [45, 106], [46, 99], [47, 89], [48, 78], [49, 65], [50, 53], [51, 43], [52, 34], [53, 28], [54, 25], [55, 22]], '#e9c12c');
    document.getElementById('macd').innerHTML = s;
}

function drawAxis() {
    let s = '';
    for (let i = 15; i < 56; i++) {
        const major = i === 25 || i === 55;
        s += line(x(i), 2, x(i), major ? 17 : 11, `stroke="${i < 19 ? '#ccc' : '#777'}" stroke-width="${major ? 3 : 2}"`);
    }
    s += text(5, 50, 37, '#666', '20250821') + text(305, 50, 37, '#666', '20250925', 'text-anchor="middle"');
    s += text(666, 50, 37, '#666', '20251114', 'text-anchor="end"');
    document.getElementById('axis').innerHTML = s;
}

function drawChips() {
    // y, bar length
    const keys = [[0, 1], [29, 16], [32, 22], [35, 36], [42, 67], [48, 97], [55, 127], [58, 142], [61, 150], [67, 145], [70, 138], [73, 132], [77, 133], [83, 146], [86, 167], [89, 191], [92, 213], [96, 233], [99, 256], [102, 292], [105, 327], [107, 340], [108, 339], [112, 311], [115, 274], [118, 236], [121, 213], [124, 221], [127, 211], [131, 197], [143, 151], [147, 123], [150, 101], [153, 78], [156, 56], [159, 30], [163, 21], [166, 18], [181, 17], [203, 19], [220, 11], [242, 22], [247, 19], [269, 21], [279, 5], [284, 2], [306, 7], [315, 15], [331, 47], [334, 39], [341, 22], [345, 13], [354, 22], [369, 31], [372, 24], [381, 7], [391, 4], [398, 6], [410, 0]];
    const step = 410 / 128;
    let s = '';
    for (let n = 0; n < 128; n++) {
        const y = (n + 0.5) * step;
        const k = keys.findIndex(p => p[0] > y);
        const [a, b] = [keys[k - 1], keys[k]];
        const w = a[1] + (b[1] - a[1]) * (y - a[0]) / (b[0] - a[0]);
        const red = y > 75;
        s += rect(0, n * step, w, step, `fill="${red ? '#f08080' : '#8ed07f'}"`);
        s += rect(0, n * step, w, step * 0.78, `fill="${red ? '#e54848' : '#5cb848'}"`);
    }
    document.getElementById('chipChart').innerHTML = s;
}

drawKline();
drawVolume();
drawWr();
drawMacd();
drawAxis();
drawChips();
```
